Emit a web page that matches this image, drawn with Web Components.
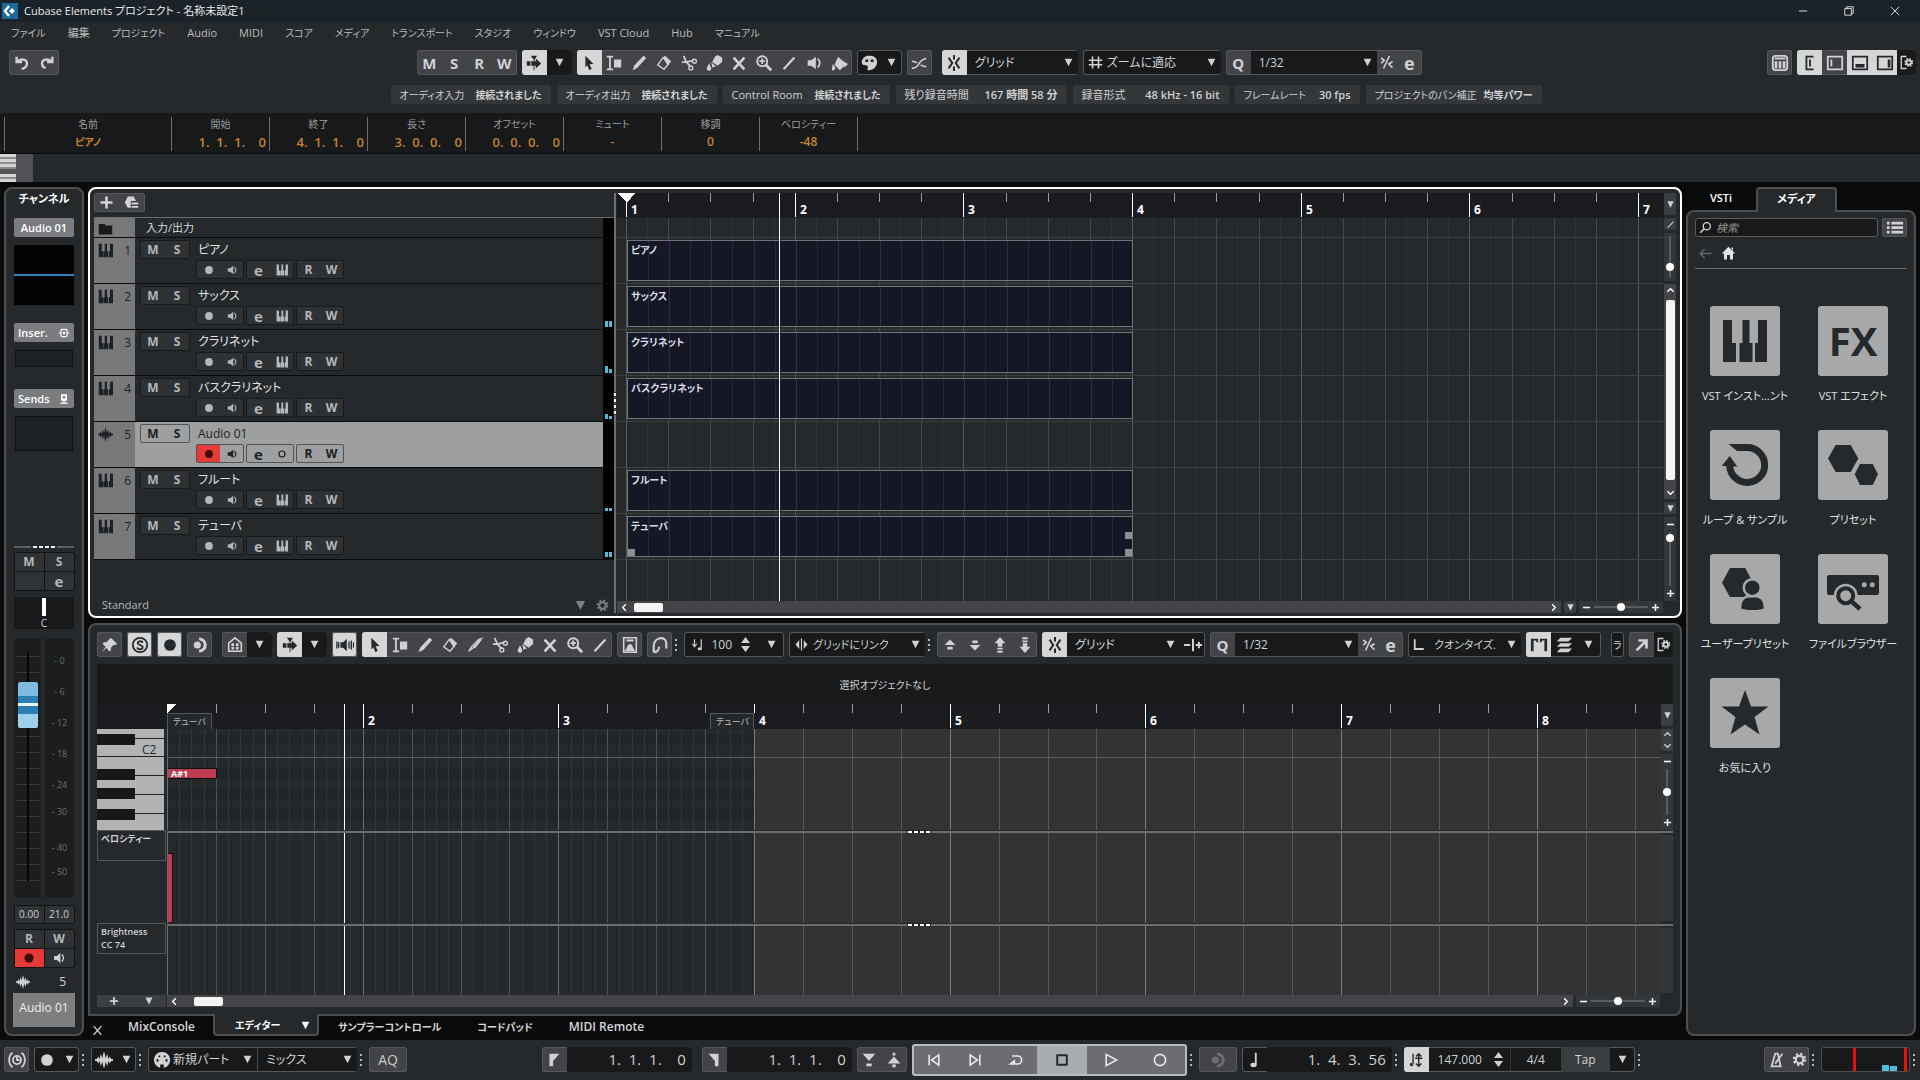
<!DOCTYPE html>
<html lang="ja">
<head>
<meta charset="UTF-8">
<meta name="viewport" content="width=device-width, initial-scale=1">
<title>Cubase Elements プロジェクト - 名称未設定1</title>
<style>
    html, body {
        margin: 0;
        height: 100%;
    }

    body {
        --panel: #25292c;
        --line: #4c4f52;
        --field: #17191a;
        --btn: #424447;
        --text: #cfd1d3;
        --accent: #c5822f;
        --cyan: #4fbdd8;
        background: var(--panel);
        color: var(--text);
        font-family: "Open Sans", "Noto Sans CJK JP", sans-serif;
        font-size: 12px;
        line-height: 16px;
        font-feature-settings: "palt";
        overflow: hidden;
    }
</style>
</head>
<body>
<cb-app></cb-app>

<script>
/* ---------- ICONS ---------- */
const S = 'fill="none" stroke="currentColor"';
const ICONS = {
    undo: `<path ${S} stroke-width="2.6" d="M4 3v6h6M4.500 8.500C8 5 16 5 15.500 11c-.3 3-3 5-6 5.500"/>`,
    redo: `<path ${S} stroke-width="2.6" d="M16 3v6h-6M15.500 8.500C12 5 4 5 4.500 11c.2 2 1.500 4 4 4.500"/>`,
    autoscroll: '<path d="M6.500 2h7l-3 4v12h-1V6zM2 8h4v5H2zM7 8h5V5l6 5.500-6 5.500v-3H7z"/>',
    select: '<path d="M6 2l9 9-4.500.5 2.500 5-2.500 1.500-2.500-5.500L6 15z"/>',
    range: '<path d="M2 2h7v2H6.500v12H9v2H2v-2h2.500V4H2zM10 6h8v9h-8z"/>',
    pencil: '<path d="M3 18l1.500-5L15 2l3 2.500L8 15.500z"/>',
    knife: `<path ${S} stroke-width="1.5" d="M3 17l5-4L17 3l-3 1L6 12z"/><path d="M8 12l8-9 1 2-7 9z"/>`,
    eraser: `<path d="M9 4l2-2 7 6-4 5z"/><path ${S} stroke-width="1.500" d="M3 12l6-8 6 7-5 6z"/>`,
    scissors: `<path ${S} stroke-width="2" d="M4 2l3 7 5 5M2 9h5l8-2"/><circle cx="16" cy="8" r="2.200" ${S} stroke-width="1.500"/><circle cx="12" cy="15.500" r="2.200" ${S} stroke-width="1.500"/>`,
    glue: '<path d="M8 9l3-6 3-2 5 3v5l-5 4zM7 9l5 5-4 1z"/><circle cx="4.500" cy="16" r="2.500"/><path d="M4.500 10l2.500 6H2z"/>',
    mute: `<path ${S} stroke-width="3" d="M4 4l12 13M16 4L4 17"/>`,
    zoom: `<circle cx="8" cy="8" r="5.500" ${S} stroke-width="2.200"/><path ${S} stroke-width="2" d="M8 5v6M5 8h6"/><path ${S} stroke-width="3.200" d="M12 12l6 6"/>`,
    line: `<path ${S} stroke-width="2.400" d="M4 17L16 4"/>`,
    speaker: `<path d="M3 7h4l5-4v14l-5-4H3z"/><path ${S} stroke-width="1.800" d="M14 5q5 5 0 10"/>`,
    bucket: '<path d="M9 3l9 8-7 7-6-6zM3 11l3 4-1 3H2z"/><path d="M13 7l7 4-4 4z"/>',
    palette: '<path fill-rule="evenodd" d="M10 2c5 0 9 2 9 7S14 19 9 18c-2-.5 1-4-1-5-2-.5-5 0-6-3-.5-5 4-8 8-8zM6 6v3h3V6zM12 6v3h3V6z"/>',
    crossfade: `<path ${S} stroke-width="1.800" d="M2 16c10 0 6-10 16-11M2 8c4 0 5 1 6 2M12 12c1 1 2 2 6 2"/>`,
    snap: `<path ${S} stroke-width="2.200" d="M4 4l4 6-4 6M16 4l-4 6 4 6M10 1v5M10 14v5"/>`,
    hash: `<path ${S} stroke-width="2.200" d="M6 2v16M14 2v16M1 7h18M1 13h18"/>`,
    iq: `<path ${S} stroke-width="2.200" d="M3 4l4 3-4 4M14 1L6 18M18 9l-5 3 5 5"/>`,
    down: '<path d="M3 3h14l-7 14z"/>',
    keys: '<path d="M1 1h4v10h2v8H1zM9 1h3v10h1.500v8h-6v-8H9zM16 1h4v18h-5.500v-8H16z"/>',
    rack: `<rect x="2" y="2" width="16" height="16" rx="3" ${S} stroke-width="2"/><path d="M4 8h3v8H4zM8.500 8h3v8h-3zM13 8h3v8h-3zM4 4h12v2H4z"/>`,
    zoneInsp: `<path ${S} stroke-width="2" d="M14 3H6v14h8"/><path d="M9 6h2v8H9z"/>`,
    zoneLeft: `<path ${S} stroke-width="2" d="M2 3h16v14H2z"/><path d="M5 6h2v8H5z"/>`,
    zoneLow: `<path ${S} stroke-width="2" d="M2 3h16v14H2z"/><path d="M5 11h10v4H5z"/>`,
    zoneRight: `<path ${S} stroke-width="2" d="M2 3h16v14H2z"/><path d="M13 6h3v9h-3z"/>`,
    setup: `<path ${S} stroke-width="1.800" d="M10 2H3v16h7"/><circle cx="13" cy="10" r="3" ${S} stroke-width="2.500"/><circle cx="13" cy="10" r="5" ${S} stroke-width="2" stroke-dasharray="2.200 1.720"/>`,
    gear: `<circle cx="10" cy="10" r="5" ${S} stroke-width="3"/><circle cx="10" cy="10" r="7.500" ${S} stroke-width="3" stroke-dasharray="3 2.900"/>`,
    folder: '<path d="M1 4h8l1 2h9v12H1z"/>',
    wave: '<path d="M0 9h2l1.500-3L5 9l1.500-6L8 8l2-8 2 8 1.500-5L15 9l1.500-3L18 9h2v2h-2l-1.500 3-1.500-3-1.500 6-1.500-5-2 8-2-8-1.500 5L5 11l-1.500 3L2 11H0z"/>',
    dot: '<circle cx="10" cy="10" r="6.500"/>',
    ring: `<circle cx="10" cy="10" r="5" ${S} stroke-width="2"/>`,
    plus: `<path ${S} stroke-width="3.500" d="M10 2v16M2 10h16"/>`,
    minus: `<path ${S} stroke-width="3.500" d="M2 10h16"/>`,
    preset: '<path d="M5 2h8l3 6H9v9H5L1 10zM10 10h9v2.500h-9zM10 14.500h9V17h-9z"/>',
    insert: `<rect x="5" y="4" width="10" height="12" rx="2" ${S} stroke-width="2"/><path d="M8 8h4v4H8zM1 9h3v2H1zM16 9h3v2h-3z"/>`,
    send: '<path fill-rule="evenodd" d="M5 2h10v11H5zM8 5v4h4V5zM9 13h2v3h5v2H4v-2h5z"/>',
    pin: '<path d="M11 2l7 7-2 1-2 0-3 3v3l-2 1-3-4-5 5 4-6-3-3 1-2h3l3-3z"/>',
    solo: `<circle cx="10" cy="10" r="8" ${S} stroke-width="2"/><path ${S} stroke-width="2" d="M13 7.500C12 5 7 5.500 7.500 8c.5 2 5 2 5.500 4.500.2 3-5.500 3-6 .2"/>`,
    feedback: `<circle cx="7" cy="10" r="4"/><path ${S} stroke-width="3.500" d="M9 3c9 1 9 13 0 14"/>`,
    home2: `<path ${S} stroke-width="1.800" d="M3 8l7-6 7 6v9H3z"/><path d="M6 8h3v3H6zM11 8h3v3h-3zM6 12h3v3H6zM11 12h3v3h-3z"/>`,
    acoustic: `<path d="M5 7h3l4-4v14l-4-4H5z"/><path ${S} stroke-width="1.500" d="M1 6v8M3 7v6M14.500 6v8M17 5v10M19.500 7v6"/>`,
    part: `<path ${S} stroke-width="1.800" d="M3 2h14v16H3z"/><path d="M6 4h8v2H6zM4 17c3-3 3-8 6-8s3 5 6 8z"/>`,
    loop: `<path ${S} stroke-width="2.400" d="M3 18v-6C3 0 17 0 17 8v6M3 18c3 0 6-2 6-6"/>`,
    noteIn: `<path ${S} stroke-width="1.600" d="M6 3v9M3 9l3 4 3-4M15 3v12"/><ellipse cx="13" cy="15.500" rx="3" ry="2"/>`,
    link: '<path d="M9.200 2h1.600v16H9.200zM7 4v12L2 10zM13 4v12l5-6z"/>',
    up1: '<path d="M10 4l6 6H4zM7 12h6v3H7z"/>',
    down1: '<path d="M10 16l6-6H4zM7 5h6v3H7z"/>',
    up2: '<path d="M10 1l6 7H4zM7.500 8h5v4h-5zM7 13h6v2H7zM7 16.500h6v2H7z"/>',
    down2: '<path d="M10 19l6-7H4zM7.500 8h5v4h-5zM7 1.500h6v2H7zM7 5h6v2H7z"/>',
    nudge: `<path ${S} stroke-width="2.200" d="M0 10h7M10 3v14M13 10h7M16.500 6.500v7"/>`,
    ell: `<path ${S} stroke-width="2.400" d="M5 3v13h12"/>`,
    magnet: '<path d="M1 3h8v4H7V5H4v12H1zM11 3h8v14h-3V5h-3v2h-2z"/>',
    stack: '<path d="M6 2h13l-4 4H2zM6 8h13l-4 4H2zM6 14h13l-4 4H2z"/>',
    open: `<path ${S} stroke-width="3" d="M6 5h9v9M15 5L4 16"/>`,
    search: `<circle cx="12" cy="8" r="5.500" ${S} stroke-width="2"/><path ${S} stroke-width="2.500" d="M8 12l-6 6"/>`,
    list: '<path d="M1 3h3v3H1zM6 3h13v3H6zM1 8h3v3H1zM6 8h13v3H6zM1 13h3v3H1zM6 13h13v3H6z"/>',
    back: `<path ${S} stroke-width="2" d="M18 10H3M9 4l-6 6 6 6"/>`,
    home: '<path d="M10 1l9 9h-3v8h-4v-6H8v6H4v-8H1zM14 2h2v4l-2-2z"/>',
    clock: `<circle cx="10" cy="10" r="4.500" ${S} stroke-width="2"/><path ${S} stroke-width="2" d="M10 6v4h3M5 2c-5 4-5 12 0 16M15 2c5 4 5 12 0 16"/>`,
    midi: '<path fill-rule="evenodd" d="M10 1a9 9 0 1 0 .1 0zM4 9h2v3H4zM6 5h2v2H6zM12 5h2v2h-2zM14 9h2v3h-2zM8 15h4v4H8z"/>',
    locL: '<path d="M5 3h11l-7 8v6H5z"/>',
    locR: '<path d="M15 3H4l7 8v6h4z"/>',
    inP: '<path d="M3 3h14l-7 8zM7 14h6v3H7z"/>',
    outP: '<path d="M10 6l7 8H3zM8 15h4v3H8zM8.500 2h3v3h-3z"/>',
    toStart: `<path ${S} stroke-width="2" d="M4 3v14M16 3.500L7 10l9 6.500z"/>`,
    toEnd: `<path ${S} stroke-width="2" d="M16 3v14M4 3.500l9 6.500-9 6.500z"/>`,
    cycle: `<path ${S} stroke-width="2" d="M5 5h7a4.500 4.500 0 0 1 0 10H5M8 11l-5 4h5z"/>`,
    stop: `<path ${S} stroke-width="2.400" d="M4 4h12v12H4z"/>`,
    play: `<path ${S} stroke-width="2" d="M4 3l13 7-13 7z"/>`,
    rec: `<circle cx="10" cy="10" r="7" ${S} stroke-width="2"/>`,
    note: '<path d="M11 2h2v13h-2z"/><ellipse cx="9.500" cy="15.500" rx="3.500" ry="2.500"/>',
    tempo: `<path d="M6 3h1.500v12H6zM3 15a2 2 0 1 0 4 0 2 2 0 1 0-4 0"/><path ${S} stroke-width="1.600" d="M13 3v14M10 6l3-3 3 3M10 14l3 3 3-3M9 8h8"/>`,
    click: `<path ${S} stroke-width="2" d="M8 3h3l3 14H4zM8 14l8-11"/>`,
    spin: '<path d="M10 0l6 8H4zM10 20l6-8H4z"/>',
    close: `<path ${S} stroke-width="2.400" d="M3 2l14 16M17 2L3 18"/>`,
    winMin: `<path ${S} stroke-width="1.500" d="M3 10h14"/>`,
    winMax: `<path ${S} stroke-width="1.500" d="M3 6h11v11H3zM6 6V3h11v11h-3"/>`,
    winClose: `<path ${S} stroke-width="1.500" d="M3 3l14 14M17 3L3 17"/>`,
    chevL: `<path ${S} stroke-width="3" d="M13 3l-7 7 7 7"/>`,
    chevR: `<path ${S} stroke-width="3" d="M7 3l7 7-7 7"/>`,
    chevU: `<path ${S} stroke-width="3" d="M3 13l7-7 7 7"/>`,
    chevD: `<path ${S} stroke-width="3" d="M3 7l7 7 7-7"/>`
};

class CbElement extends HTMLElement {
    constructor() {
        super();
        this.attachShadow({ mode: 'open' });
    }

    connectedCallback() {
        this.shadowRoot.innerHTML = `<style>
            *, :host { box-sizing: border-box; }
            button, input, select {
                font: inherit;
                font-feature-settings: inherit;
                color: inherit;
                margin: 0;
                padding: 0;
                border: 0;
                background: none;
                min-width: 0;
            }
            ${this.styles}
        </style>${this.markup}`;
    }

    attr(name, fallback = '') {
        return this.getAttribute(name) ?? fallback;
    }
}

class CbIcon extends CbElement {
    get styles() {
        return `
            :host { display: block; flex: none; width: var(--icon, 18px); height: var(--icon, 18px); }
            svg { display: block; width: 100%; height: 100%; fill: currentColor; }
        `;
    }

    get markup() {
        return `<svg viewBox="0 0 20 20" aria-hidden="true">${ICONS[this.attr('name')]}</svg>`;
    }
}
customElements.define('cb-icon', CbIcon);

/* Button for toolbars: <cb-btn icon="pencil" label="..."></cb-btn> or text in the slot */
class CbBtn extends CbElement {
    get styles() {
        return `
            :host { display: flex; flex: none; width: 25px; align-self: stretch; }
            :host([on]) { background: #d5d6d7; color: #25292c; }
            :host([dark]) { background: var(--field); }
            :host([narrow]) { width: 20px; --icon: 15px; }
            :host([arrow]) { --icon: 11px; }
            :host([red]) { background: #e53a36; color: #3a0c0a; }
            button {
                flex: 1;
                display: flex;
                align-items: center;
                justify-content: center;
                cursor: pointer;
            }
        `;
    }

    get markup() {
        const icon = this.attr('icon');
        return `<button type="button" ${this.hasAttribute('label') ? `aria-label="${this.attr('label')}"` : ''}>
            ${icon ? `<cb-icon name="${icon}"></cb-icon>` : '<slot></slot>'}
        </button>`;
    }
}
customElements.define('cb-btn', CbBtn);

class CbGroup extends CbElement {
    get styles() {
        return `
            :host {
                display: flex;
                flex: none;
                height: 25px;
                align-items: center;
                background: var(--btn);
                border-radius: 3px;
                box-shadow: inset 0 0 0 1px #55585a;
                overflow: hidden;
            }
            :host([field]) { background: var(--field); }
            :host([on]) { background: #d5d6d7; color: #25292c; }
        `;
    }

    get markup() {
        return '<slot></slot>';
    }
}
customElements.define('cb-group', CbGroup);

class CbSelect extends CbElement {
    get styles() {
        return `
            :host { display: grid; align-items: center; height: 23px; flex: none; margin: 1px 0; background: var(--field); }
            select, cb-icon { grid-area: 1 / 1; }
            select { appearance: none; width: 100%; height: 100%; padding: 0 16px 0 var(--pad, 8px); cursor: pointer; }
            cb-icon { --icon: 11px; justify-self: end; margin-right: 4px; pointer-events: none; }
        `;
    }

    get markup() {
        return `<select aria-label="${this.attr('label')}"><option>${this.attr('value')}</option></select>
            <cb-icon name="down"></cb-icon>`;
    }
}
customElements.define('cb-select', CbSelect);

class CbDots extends CbElement {
    get styles() {
        return `
            :host { display: flex; flex-direction: column; gap: 3px; width: 2px; flex: none; }
            i { height: 2px; background: #b5b7b9; }
        `;
    }

    get markup() {
        return '<i></i><i></i><i></i>';
    }
}
customElements.define('cb-dots', CbDots);

/* Zoom slider, horizontal or vertical */
class CbSlider extends CbElement {
    get styles() {
        return `
            :host { display: flex; align-items: center; gap: 3px; background: #34373a; height: 12px; padding: 0 3px; --icon: 9px; color: #f2f2f2; }
            :host([vertical]) { flex-direction: column; width: 12px; height: auto; padding: 3px 0; }
            input { appearance: none; flex: 1; width: 100%; height: 12px; background: linear-gradient(#595c5e, #595c5e) center / 100% 2px no-repeat; }
            :host([vertical]) input { writing-mode: vertical-lr; direction: rtl; width: 12px; height: auto; min-height: 0; background-size: 2px 100%; }
            input::-webkit-slider-thumb { appearance: none; width: 8px; height: 8px; border-radius: 50%; background: #fff; }
        `;
    }

    get markup() {
        const bare = this.hasAttribute('bare');
        return `${bare ? '' : '<cb-icon name="minus"></cb-icon>'}
            <input type="range" value="${this.attr('value', 50)}" aria-label="${this.attr('label')}">
            ${bare ? '' : '<cb-icon name="plus"></cb-icon>'}`;
    }
}
customElements.define('cb-slider', CbSlider);

class CbTitleBar extends CbElement {
    get styles() {
        return `
            :host { display: flex; align-items: center; height: 22px; padding: 0 2px; gap: 6px; background: #1b2228; color: #e8eaeb; }
            .logo { width: 16px; height: 16px; }
            .title { flex: 1; font-size: 11px; }
            button { width: 46px; height: 20px; display: grid; place-items: center; --icon: 12px; }
            .win { display: flex; }
        `;
    }

    get markup() {
        return `
            <svg class="logo" viewBox="0 0 16 16"><path fill="#1c6a9c" d="M0 0h16v16H0z"/><path fill="none" stroke="#fff" stroke-width="2.500" d="M7 3L3 8l4 5"/><path fill="#fff" d="M10 5l3 3-3 3-3-3z"/></svg>
            <span class="title">Cubase Elements プロジェクト - 名称未設定1</span>
            <div class="win">
                <button aria-label="最小化"><cb-icon name="winMin"></cb-icon></button>
                <button aria-label="元に戻す"><cb-icon name="winMax"></cb-icon></button>
                <button aria-label="閉じる"><cb-icon name="winClose"></cb-icon></button>
            </div>
        `;
    }
}
customElements.define('cb-title-bar', CbTitleBar);

class CbMenuBar extends CbElement {
    get styles() {
        return `
            :host { display: flex; align-items: center; gap: 22px; height: 22px; padding-left: 11px; font-size: 11px; color: #b9bbbd; }
            .kana { font-size: 10px; }
        `;
    }

    get markup() {
        const items = ['ファイル', '編集', 'プロジェクト', 'Audio', 'MIDI', 'スコア', 'メディア', 'トランスポート',
            'スタジオ', 'ウィンドウ', 'VST Cloud', 'Hub', 'マニュアル'];
        return items.map(item => `<button class="${/[ァ-ヶ]/.test(item) ? 'kana' : ''}">${item}</button>`).join('');
    }
}
customElements.define('cb-menu-bar', CbMenuBar);

class CbToolbar extends CbElement {
    get styles() {
        return `
            :host { display: flex; align-items: center; gap: 5px; height: 37px; padding: 0 4px 0 9px; }
            .l { flex: 28; }
            .r { flex: 27; }
            b { font-size: 15px; font-weight: 700; }
            .e { font-size: 18px; }
            .snap { width: 111px; }
            .adapt { width: 118px; --pad: 4px; }
            .quant { width: 126px; }
            .gap { width: 0; }
            .hash { margin-left: 5px; --icon: 15px; }
            .setup { width: 19px; --icon: 15px; }
        `;
    }

    get markup() {
        return `
            <cb-group><cb-btn icon="undo" label="元に戻す"></cb-btn><cb-btn icon="redo" label="再実行"></cb-btn></cb-group>
            <span class="l"></span>
            <cb-group>${['M', 'S', 'R', 'W'].map(t => `<cb-btn><b>${t}</b></cb-btn>`).join('')}</cb-group>
            <cb-group><cb-btn on icon="autoscroll" label="自動スクロール"></cb-btn><cb-btn dark arrow icon="down" label="自動スクロール設定"></cb-btn></cb-group>
            <cb-group>
                <cb-btn on icon="select" label="選択"></cb-btn>
                ${['range', 'pencil', 'eraser', 'scissors', 'glue', 'mute', 'zoom', 'line', 'speaker', 'bucket']
                    .map(t => `<cb-btn icon="${t}" label="${t}"></cb-btn>`).join('')}
            </cb-group>
            <cb-group field><cb-btn icon="palette" label="カラー"></cb-btn><cb-btn narrow arrow icon="down" label="カラーメニュー"></cb-btn></cb-group>
            <cb-group><cb-btn icon="crossfade" label="ゼロクロス"></cb-btn></cb-group>
            <span class="gap"></span>
            <cb-group field><cb-btn on icon="snap" label="スナップ"></cb-btn><cb-select class="snap" value="グリッド" label="スナップタイプ"></cb-select></cb-group>
            <cb-group field><cb-icon class="hash" name="hash"></cb-icon><cb-select class="adapt" value="ズームに適応" label="グリッドの種類"></cb-select></cb-group>
            <cb-group><cb-btn><b>Q</b></cb-btn><cb-select class="quant" value="1/32" label="クオンタイズ"></cb-select><cb-btn narrow icon="iq" label="反復クオンタイズ"></cb-btn><cb-btn><b class="e">e</b></cb-btn></cb-group>
            <span class="r"></span>
            <cb-group><cb-btn icon="rack" label="VST インストゥルメント"></cb-btn></cb-group>
            <cb-group>
                <cb-btn on icon="zoneInsp" label="インスペクター"></cb-btn>
                <cb-btn icon="zoneLeft" label="左ゾーン"></cb-btn>
                <cb-btn on icon="zoneLow" label="下ゾーン"></cb-btn>
                <cb-btn on icon="zoneRight" label="右ゾーン"></cb-btn>
                <cb-btn dark class="setup" icon="setup" label="設定"></cb-btn>
            </cb-group>
        `;
    }
}
customElements.define('cb-toolbar', CbToolbar);

class CbStatusLine extends CbElement {
    get styles() {
        return `
            :host { display: flex; justify-content: center; gap: 6px; height: 32px; padding: 4px 0 9px 12px; font-size: 11px; }
            div { display: flex; align-items: center; justify-content: space-between; padding: 0 9px; background: #34373a; border-radius: 2px; white-space: nowrap; }
            b { font-weight: 600; }
            .kana { font-size: 10px; }
        `;
    }

    get markup() {
        const chips = [
            ['オーディオ入力', '接続されました', 160], ['オーディオ出力', '接続されました', 160],
            ['Control Room', '接続されました', 167], ['残り録音時間', '167 時間 58 分', 171],
            ['録音形式', '48 kHz - 16 bit', 156], ['フレームレート', '30 fps', 125],
            ['プロジェクトのパン補正', '均等パワー', 176]
        ];
        const size = t => /[ァ-ヶ]{2}|ました/.test(t) ? 'kana' : '';
        return chips.map(([k, v, w]) => `<div style="width:${w}px"><span class="${size(k)}">${k}</span><b class="${size(v)}">${v}</b></div>`).join('');
    }
}
customElements.define('cb-status-line', CbStatusLine);

class CbInfoLine extends CbElement {
    get styles() {
        return `
            :host { display: flex; height: 41px; padding: 4px 0 2px 4px; background: #17191a; border-bottom: 1px solid #0a0a0b; }
            div { width: 98px; padding: 0 3px; border-left: 1px solid #6a6c6e; text-align: center; font-size: 10px; }
            div:first-of-type { width: 167px; }
            div:last-of-type { width: 99px; border-right: 1px solid #6a6c6e; }
            span { display: block; line-height: 15px; color: #9c9ea0; }
            b { display: block; font-weight: 600; font-size: 12px; line-height: 20px; color: var(--accent); white-space: pre; }
            .pos b { text-align: right; font-size: 13px; }
            .name b { font-size: 10px; }
        `;
    }

    get markup() {
        const cells = [
            ['名前', 'ピアノ', 'name'], ['開始', '1.  1.  1.    0', 'pos'], ['終了', '4.  1.  1.    0', 'pos'],
            ['長さ', '3.  0.  0.    0', 'pos'], ['オフセット', '0.  0.  0.    0', 'pos'],
            ['ミュート', '-', ''], ['移調', '0', ''], ['ベロシティー', '-48', '']
        ];
        return cells.map(([k, v, kind]) => `<div class="${kind}"><span>${k}</span><b>${v}</b></div>`).join('');
    }
}
customElements.define('cb-info-line', CbInfoLine);

class CbOverview extends CbElement {
    get styles() {
        return `
            :host { display: flex; height: 28px; }
            div { width: 33px; background: #515356; }
            i { display: block; width: 16px; height: 15px; margin-bottom: 5px; background: repeating-linear-gradient(#d4d4d4 0 3px, #8b8d8f 3px 5px); }
            i + i { height: 8px; margin: 0; }
        `;
    }

    get markup() {
        return '<div><i></i><i></i></div>';
    }
}
customElements.define('cb-overview', CbOverview);

/* ---------- CHANNEL STRIP ---------- */
class CbChannel extends CbElement {
    get styles() {
        return `
            :host { display: flex; flex-direction: column; align-items: center; border: 2px solid var(--line); border-radius: 8px; background: var(--panel); padding: 1px 0 7px; }
            h2 { margin: 0 0 11px; font-size: 11px; line-height: 17px; font-weight: 600; color: #fff; flex: none; }
            .head { display: flex; align-items: center; justify-content: center; width: 60px; height: 19px; flex: none; background: #7a7c7f; border-radius: 2px; color: #fff; font-weight: 600; font-size: 11px; --icon: 12px; }
            .head.two { justify-content: space-between; padding: 0 4px; }
            .eq { width: 60px; height: 60px; flex: none; margin: 8px 0 18px; background: linear-gradient(#2f84bd, #2f84bd) center / 100% 2px no-repeat #020202; }
            .slot { width: 58px; height: 17px; flex: none; margin: 8px 0 22px; background: #1e2123; border: 1px solid #0f1011; }
            .slot.tall { height: 35px; margin-bottom: 0; }
            .fill { flex: 1; }
            .split { width: 60px; height: 2px; flex: none; background: linear-gradient(90deg, #5b5d5f 28%, transparent 28% 72%, #5b5d5f 72%); display: flex; justify-content: center; gap: 2px; }
            .split i { width: 4px; height: 2px; background: #eee; }
            .pad { display: grid; grid-template-columns: 1fr 1fr; grid-auto-rows: 18px; gap: 1px; width: 61px; padding: 1px; flex: none; background: #111213; border-radius: 2px; --icon: 14px; }
            .pad > * { background: #303336; width: auto; text-align: center; }
            .pad cb-btn[red] { background: #e53a36; }
            .pad b { font-size: 12px; color: #b4b6b8; }
            .pad .e { font-size: 15px; }
            .ms { margin: 4px 0 6px; }
            .pan { width: 60px; height: 32px; flex: none; background: #17191a; display: flex; flex-direction: column; align-items: center; font-size: 10px; line-height: 12px; }
            .pan i { width: 4px; height: 18px; background: #fff; margin: 1px 0; }
            .fader { display: grid; grid-template-columns: 27px 29px; gap: 4px; height: 260px; flex: none; margin: 9px 0 7px; }
            .fader > div { background: #1b1d1e; border-radius: 3px; display: flex; justify-content: center; }
            input { appearance: none; writing-mode: vertical-lr; direction: rtl; width: 22px; height: 252px; background: linear-gradient(#050505, #050505) center / 2px 228px no-repeat, repeating-linear-gradient(transparent 0 15px, #3b3d3f 15px 16px); margin-top: 3px; }
            input::-webkit-slider-thumb { appearance: none; width: 20px; height: 46px; border-radius: 2px; background: linear-gradient(#7dbbe0 0 30%, #2a7fb5 30% 46%, #e8f4fa 46% 52%, #2a7fb5 52% 70%, #9ed0ec 70%); }
            .scale { flex-direction: column; justify-content: flex-start !important; padding-top: 15px; color: #6e7072; font-size: 9px; text-align: center; }
            .scale span { flex: 0 0 31px; }
            .scale span:nth-child(n+5) { flex-basis: 27px; }
            .scale span:nth-child(6) { flex-basis: 36px; }
            .scale span:nth-child(7) { flex-basis: 24px; }
            .vals { font-size: 10px; line-height: 17px; grid-auto-rows: 17px; }
            .rw { margin: 5px 0 6px; }
            .num { display: flex; justify-content: space-between; align-items: center; width: 56px; height: 16px; --icon: 14px; margin-bottom: 3px; padding-right: 6px; flex: none; }
            .name { width: 62px; height: 34px; flex: none; background: #7c7e80; color: #f0f0f0; text-align: center; line-height: 30px; white-space: nowrap; }
        `;
    }

    get markup() {
        return `
            <h2>チャンネル</h2>
            <div class="head">Audio 01</div>
            <div class="eq"></div>
            <div class="head two">Inser.<cb-icon name="insert"></cb-icon></div>
            <div class="slot"></div>
            <div class="head two">Sends<cb-icon name="send"></cb-icon></div>
            <div class="slot tall"></div>
            <div class="fill"></div>
            <div class="split"><i></i><i></i><i></i><i></i></div>
            <div class="pad ms"><cb-btn><b>M</b></cb-btn><cb-btn><b>S</b></cb-btn><span></span><cb-btn><b class="e">e</b></cb-btn></div>
            <div class="pan"><i></i>C</div>
            <div class="fader">
                <div><input type="range" min="0" max="100" value="80" aria-label="音量"></div>
                <div class="scale">${[0, 6, 12, 18, 24, 30, 40, 50].map(n => `<span>- ${n}</span>`).join('')}</div>
            </div>
            <div class="pad vals"><span>0.00</span><span>21.0</span></div>
            <div class="pad rw"><cb-btn><b>R</b></cb-btn><cb-btn><b>W</b></cb-btn><cb-btn red icon="dot" label="録音可能"></cb-btn><cb-btn icon="speaker" label="モニター"></cb-btn></div>
            <div class="num"><cb-icon name="wave"></cb-icon><span>5</span></div>
            <div class="name">Audio 01</div>
        `;
    }
}
customElements.define('cb-channel', CbChannel);

/* ---------- TRACK LIST ---------- */
class CbTrack extends CbElement {
    get styles() {
        return `
            :host { display: flex; height: 46px; flex: none; border-bottom: 1px solid #08090a; color: #b5b7b9; }
            .tab { width: 41px; background: #77797b; color: #1f2224; display: flex; justify-content: space-between; padding: 5px 4px 0; --icon: 15px; font-size: 12px; }
            .body { flex: 1; display: grid; grid-template-columns: 50px 1fr; column-gap: 6px; row-gap: 1px; align-content: start; padding: 2px 0 0 5px; }
            .body > span { line-height: 19px; padding-left: 2px; color: #e0e2e3; }
            .set { display: grid; grid-auto-flow: column; grid-auto-columns: 1fr; height: 19px; border: 1px solid #17191a; border-radius: 2px; background: #2f3235; --icon: 12px; }
            .set cb-btn { width: auto; }
            .row { grid-column: 2; display: flex; gap: 2px; }
            .row .set { width: 48px; }
            b { font-size: 12px; }
            .e { font-size: 15px; }
            .meter { width: 11px; background: #020202; display: flex; align-items: flex-end; justify-content: center; gap: 1px; padding-bottom: 2px; }
            .meter i { width: 3px; background: var(--cyan); }
            :host([selected]) .body { background: #9d9fa1; color: #1c1e20; }
            :host([selected]) .body > span { color: #1c1e20; }
            :host([selected]) .set { border-color: #515355; background: none; }
        `;
    }

    get markup() {
        const audio = this.attr('kind') === 'audio';
        const levels = this.attr('levels', '0,0').split(',');
        return `
            <div class="tab"><cb-icon name="${audio ? 'wave' : 'keys'}"></cb-icon>${this.attr('no')}</div>
            <div class="body">
                <div class="set"><cb-btn><b>M</b></cb-btn><cb-btn><b>S</b></cb-btn></div>
                <span>${this.attr('name')}</span>
                <div class="row">
                    <div class="set"><cb-btn ${audio ? 'red' : ''} icon="dot" label="録音可能"></cb-btn><cb-btn icon="speaker" label="モニター"></cb-btn></div>
                    <div class="set"><cb-btn><b class="e">e</b></cb-btn><cb-btn icon="${audio ? 'ring' : 'keys'}" label="編集"></cb-btn></div>
                    <div class="set"><cb-btn><b>R</b></cb-btn><cb-btn><b>W</b></cb-btn></div>
                </div>
            </div>
            <div class="meter">${levels.map(l => `<i style="height:${l}px"></i>`).join('')}</div>
        `;
    }
}
customElements.define('cb-track', CbTrack);

const TRACKS = [
    { name: 'ピアノ', levels: '0,0' },
    { name: 'サックス', levels: '6,6' },
    { name: 'クラリネット', levels: '7,4' },
    { name: 'バスクラリネット', levels: '5,3' },
    { name: 'Audio 01', levels: '0,0', audio: true },
    { name: 'フルート', levels: '3,3' },
    { name: 'テューバ', levels: '5,5', handles: true }
];

class CbTrackList extends CbElement {
    get styles() {
        return `
            :host { display: flex; flex-direction: column; min-height: 0; }
            header { height: 25px; flex: none; border-bottom: 1px solid #6a6c6e; }
            header cb-group { height: 19px; width: 51px; --icon: 15px; }
            .io { display: flex; height: 20px; flex: none; border-bottom: 1px solid #08090a; font-size: 11px; line-height: 19px; color: #d8dadb; }
            .io div { width: 41px; background: #77797b; color: #17191a; padding: 3px 4px; --icon: 15px; margin-right: 11px; }
            .io span { flex: 1; }
            .io i { width: 11px; background: #020202; }
            footer { margin-top: auto; display: flex; align-items: center; gap: 9px; padding: 0 5px 0 8px; --icon: 13px; color: #7f8183; }
            footer span { flex: 1; color: #b5b7b9; font-size: 11px; }
        `;
    }

    get markup() {
        return `
            <header><cb-group><cb-btn icon="plus" label="トラックを追加"></cb-btn><cb-btn icon="preset" label="プリセット"></cb-btn></cb-group></header>
            <div class="io"><div><cb-icon name="folder"></cb-icon></div><span>入力/出力</span><i></i></div>
            ${TRACKS.map((t, i) => `<cb-track no="${i + 1}" name="${t.name}" levels="${t.levels}" ${t.audio ? 'kind="audio" selected' : ''}></cb-track>`).join('')}
            <footer><span>Standard</span><cb-icon name="down"></cb-icon><cb-icon name="gear"></cb-icon></footer>
        `;
    }
}
customElements.define('cb-track-list', CbTrackList);

/* ---------- TIMELINE DRAWING ---------- */
function gridRects({ origin, bar, bars, split, colors }) {
    let out = '';
    const per = split * 4;
    for (let i = 0; i < bars * per; i++) {
        const level = i % per === 0 ? 0 : i % split === 0 ? 1 : 2;
        if (!colors[level]) continue;
        out += `<rect x="${Math.round(origin + i * bar / per)}" width="1" height="100%" fill="${colors[level]}"/>`;
    }
    return out;
}

function rulerMarks({ origin, bar, bars, skip = [] }) {
    let out = '';
    for (let i = 0; i < bars * 4; i++) {
        const x = Math.round(origin + i * bar / 4);
        const isBar = i % 4 === 0;
        const n = i / 4 + 1;
        const tall = isBar && !skip.includes(n);
        out += `<rect x="${x}" width="1" height="${tall ? 24 : 9}" fill="${isBar ? '#fff' : '#9a9c9e'}"/>`;
        if (isBar && n !== skip[0]) out += `<text x="${x + 5}" y="21">${n}</text>`;
    }
    return out;
}

const TIMELINE_CSS = `
    svg { display: block; width: 100%; height: 100%; overflow: hidden; shape-rendering: crispEdges; }
    svg text { fill: #fff; font-size: 12px; font-weight: 700; }
`;

class CbScroll extends CbElement {
    get styles() {
        return `
            :host { display: flex; align-items: center; height: 12px; background: #434548; padding: 0 3px; --icon: 9px; color: #fff; }
            i { flex: none; width: 29px; height: 9px; border-radius: 2px; background: #f4f4f4; margin: 0 auto 0 var(--from, 4px); }
            :host([vertical]) { flex-direction: column; width: 12px; height: auto; padding: 2px 0; justify-content: space-between; }
            :host([vertical]) i { width: 9px; height: auto; flex: 1; margin: 5px 0 8px; }
        `;
    }

    get markup() {
        const [a, b] = this.hasAttribute('vertical') ? ['chevU', 'chevD'] : ['chevL', 'chevR'];
        return `<cb-icon name="${a}"></cb-icon><i></i><cb-icon name="${b}"></cb-icon>`;
    }
}
customElements.define('cb-scroll', CbScroll);

class CbArrange extends CbElement {
    get styles() {
        return `
            :host { display: grid; grid-template: 25px minmax(0, 1fr) 12px / minmax(0, 1fr) 12px; min-width: 0; min-height: 0; }
            ${TIMELINE_CSS}
            .ruler { background: #1b1c20; }
            .lanes { display: grid; grid-template: minmax(0, 1fr) / minmax(0, 1fr); overflow: hidden; }
            .lanes > * { grid-area: 1 / 1; }
            .rows { display: flex; flex-direction: column; z-index: 1; }
            .head { z-index: 2; pointer-events: none; }
            .rows > div { height: 46px; flex: none; padding: 2px 0 2px 10px; border-bottom: 1px solid #3d4043; }
            .rows > div:first-child { height: 20px; }
            .event { position: relative; width: 506px; height: 41px; background: #151725; border: 1px solid #727476; display: grid; }
            .event > * { grid-area: 1 / 1; }
            .event span { padding: 1px 3px; font-size: 10px; font-weight: 600; color: #dcdce8; }
            .event i { position: absolute; width: 7px; height: 7px; background: #8c8e96; }
            .side { display: flex; flex-direction: column; grid-row: 1 / 3; grid-column: 2; gap: 3px; --icon: 9px; min-height: 0; }
            .box { display: grid; place-items: center; background: #3c3f42; height: 12px; width: 12px; border-radius: 2px; flex: none; }
            .tall { height: 22px; }
            .bottom { grid-column: 1 / 3; display: flex; gap: 3px; --icon: 9px; padding-right: 13px; }
            .bottom cb-scroll { flex: 1; --from: 5px; }
            .bottom cb-slider { width: 84px; }
        `;
    }

    get markup() {
        const zoom = { origin: 9, bar: 168.667, bars: 7 };
        const part = gridRects({ origin: -1, bar: 168.667, bars: 3, split: 2, colors: ['#2f3063', '#2b2d58', '#25274a'] });
        const event = t => `<div class="event"><svg>${part}</svg><span>${t.name}</span>
            ${t.handles ? '<i style="left:0;bottom:0"></i><i style="right:0;bottom:0"></i><i style="right:0;top:15px"></i>' : ''}</div>`;
        return `
            <div class="ruler"><svg>${rulerMarks(zoom)}<path fill="#fff" d="M1 0h17l-8 10z"/><rect x="162" width="1" height="100%" fill="#fff"/></svg></div>
            <div class="lanes">
                <svg>${gridRects({ ...zoom, split: 2, colors: ['#56595b', '#45494b', '#2e3235'] })}</svg>
                <div class="rows"><div></div>${TRACKS.map(t => `<div>${t.audio ? '' : event(t)}</div>`).join('')}</div>
                <svg class="head"><rect x="162" width="1" height="100%" fill="#fff"/></svg>
            </div>
            <div class="side">
                <div class="box tall"><cb-icon name="down"></cb-icon></div>
                <div class="box"><cb-icon name="line"></cb-icon></div>
                <cb-slider vertical bare value="20" label="波形のズーム" style="height:48px"></cb-slider>
                <cb-scroll vertical style="flex:1"></cb-scroll>
                <div class="box"><cb-icon name="down"></cb-icon></div>
                <cb-slider vertical value="95" label="縦ズーム" style="height:84px"></cb-slider>
            </div>
            <div class="bottom">
                <cb-scroll></cb-scroll>
                <div class="box"><cb-icon name="down"></cb-icon></div>
                <cb-slider value="50" label="横ズーム"></cb-slider>
            </div>
        `;
    }
}
customElements.define('cb-arrange', CbArrange);

class CbProject extends CbElement {
    get styles() {
        return `
            :host { display: grid; grid-template: minmax(0, 1fr) / 520px 3px minmax(0, 1fr); border: 2px solid #fff; border-radius: 8px; padding: 4px 4px 3px; background: var(--panel); min-height: 0; }
            .div { background: linear-gradient(90deg, #6c6e70 2px, transparent 2px); display: flex; flex-direction: column; align-items: flex-start; justify-content: center; gap: 3px; }
            .div i { width: 2px; height: 3px; background: #fff; outline: 1px solid var(--panel); }
        `;
    }

    get markup() {
        return '<cb-track-list></cb-track-list><div class="div"><i></i><i></i><i></i><i></i></div><cb-arrange></cb-arrange>';
    }
}
customElements.define('cb-project', CbProject);

/* ---------- KEY EDITOR ---------- */
class CbEditorTools extends CbElement {
    get styles() {
        return `
            :host { display: flex; align-items: center; gap: 5px; height: 25px; flex: none; }
            .push { margin-left: 5px; }
            b { font-size: 15px; }
            .e { font-size: 18px; }
            cb-dots { margin: 0 2px 0 -2px; }
            .vel { width: 100px; --icon: 15px; }
            .vel input { width: 32px; text-align: right; }
            .vel cb-icon { margin: 0 6px; }
            .length { width: 116px; --pad: 4px; font-size: 11px; }
            .snap { width: 113px; }
            .quant { width: 123px; }
            .preset { width: 93px; font-size: 11px; --pad: 6px; }
            .link { margin-left: 5px; --icon: 15px; }
            .setup { width: 19px; --icon: 15px; }
            .more { width: 13px; padding-left: 2px; font-size: 10px; }
        `;
    }

    get markup() {
        return `
            <cb-group><cb-btn icon="pin" label="固定"></cb-btn></cb-group>
            <cb-group on><cb-btn icon="solo" label="エディターをソロ"></cb-btn></cb-group>
            <cb-group on><cb-btn icon="dot" label="エディター内録音"></cb-btn></cb-group>
            <cb-group><cb-btn icon="feedback" label="入力"></cb-btn></cb-group>
            <cb-group class="push"><cb-btn icon="home2" label="表示"></cb-btn><cb-btn dark arrow icon="down" label="表示メニュー"></cb-btn></cb-group>
            <cb-group><cb-btn on icon="autoscroll" label="自動スクロール"></cb-btn><cb-btn dark arrow icon="down" label="自動スクロール設定"></cb-btn></cb-group>
            <cb-group on><cb-btn icon="acoustic" label="試聴"></cb-btn></cb-group>
            <cb-group>
                <cb-btn on icon="select" label="選択"></cb-btn>
                ${['range', 'pencil', 'eraser', 'knife', 'scissors', 'glue', 'mute', 'zoom', 'line']
                    .map(t => `<cb-btn icon="${t}" label="${t}"></cb-btn>`).join('')}
            </cb-group>
            <cb-group><cb-btn icon="part" label="パート境界"></cb-btn></cb-group>
            <cb-group><cb-btn icon="loop" label="ループ"></cb-btn></cb-group>
            <cb-dots></cb-dots>
            <cb-group field class="vel"><cb-icon name="noteIn"></cb-icon><input value="100" size="3" aria-label="ベロシティー"><cb-icon name="spin"></cb-icon><cb-btn arrow icon="down" label="ベロシティーメニュー"></cb-btn></cb-group>
            <cb-group field><cb-icon class="link" name="link"></cb-icon><cb-select class="length" value="グリッドにリンク" label="長さ"></cb-select></cb-group>
            <cb-dots></cb-dots>
            <cb-group>${['up1', 'down1', 'up2', 'down2'].map(t => `<cb-btn icon="${t}" label="${t}"></cb-btn>`).join('')}</cb-group>
            <cb-group field><cb-btn on icon="snap" label="スナップ"></cb-btn><cb-select class="snap" value="グリッド" label="スナップタイプ"></cb-select><cb-btn icon="nudge" label="ナッジ"></cb-btn></cb-group>
            <cb-group><cb-btn><b>Q</b></cb-btn><cb-select class="quant" value="1/32" label="クオンタイズ"></cb-select><cb-btn narrow icon="iq" label="反復クオンタイズ"></cb-btn><cb-btn><b class="e">e</b></cb-btn></cb-group>
            <cb-group field><cb-btn narrow icon="ell" label="長さクオンタイズ"></cb-btn><cb-select class="preset" value="クオンタイズ." label="長さクオンタイズの値"></cb-select></cb-group>
            <cb-group field><cb-btn on icon="magnet" label="ステップ"></cb-btn><cb-btn icon="stack" label="レイヤー"></cb-btn><cb-btn arrow icon="down" label="レイヤーメニュー"></cb-btn></cb-group>
            <cb-group field class="push more">ラ</cb-group>
            <cb-group><cb-btn icon="open" label="別ウィンドウで開く"></cb-btn><cb-btn dark class="setup" icon="setup" label="設定"></cb-btn></cb-group>
        `;
    }
}
customElements.define('cb-editor-tools', CbEditorTools);

class CbKeyEditor extends CbElement {
    get styles() {
        return `
            :host { display: flex; flex-direction: column; border: 2px solid var(--line); border-radius: 8px 8px 8px 0; padding: 7px; background: var(--panel); min-height: 0; }
            ${TIMELINE_CSS}
            .info { height: 40px; margin-top: 7px; flex: none; background: #18191a; text-align: center; line-height: 42px; font-size: 10px; }
            .grid { flex: 1; display: grid; grid-template: 25px minmax(0, 1fr) 3px 90px 3px 69px 12px / 70px minmax(0, 1fr) 12px; min-height: 0; }
            .grid > * { min-width: 0; min-height: 0; overflow: hidden; }
            .ruler { background: #1b1c20; }
            .ruler svg .tag { fill: #b9bbbd; font-size: 9px; font-weight: 400; }
            .area { background: linear-gradient(90deg, transparent 587px, #323335 587px); }
            .split { grid-column: 2 / 4; background: linear-gradient(#6c6e70, #6c6e70) center / 100% 2px no-repeat; display: flex; align-items: center; gap: 2px; padding-left: 741px; }
            .split i { width: 4px; height: 2px; background: #fff; outline: 1px solid #222; }
            .lab { width: 69px; height: 31px; border: 1px solid #55585a; padding: 1px 3px; font-size: 9px; line-height: 13px; font-weight: 600; grid-row: span 2; }
            .add { display: flex; width: 69px; background: #3c3f42; --icon: 10px; }
            .add cb-btn { flex: 1; }
            .side { display: flex; flex-direction: column; gap: 3px; --icon: 9px; }
            .box { display: grid; place-items: center; background: #3c3f42; border-radius: 2px; width: 12px; height: 22px; flex: none; --icon: 9px; }
            .side cb-slider { flex: 1; min-height: 0; }
            .off { background: #34373a; margin: 2px 0; }
            .bottom { grid-column: 2 / 4; display: flex; gap: 3px; padding-right: 13px; }
            .bottom cb-scroll { flex: 1; --from: 15px; }
            .bottom cb-slider { width: 84px; }
        `;
    }

    get markup() {
        const zoom = { origin: 0, bar: 195.667, bars: 8 };
        const lines = gridRects({ ...zoom, bars: 3, split: 4, colors: ['#6a6c6e', '#505355', '#33373a'] })
            + gridRects({ ...zoom, origin: 587, bars: 5, split: 1, colors: ['#7a7b7c', '#565759'] });
        const head = '<rect x="177" width="1" height="100%" fill="#fff"/>';
        const black = [5, 40, 59, 80].map(y => `<rect y="${y}" width="38" height="11" fill="#16181a"/>`).join('');
        const seams = [9, 46, 65, 84].map(y => `<rect x="38" y="${y}" width="29" height="1" fill="#222"/>`).join('');
        const rows = [5, 40, 59, 80].map(y => `<rect y="${y}" width="587" height="11" fill="#212528"/>`).join('');
        const dots = '<i></i><i></i><i></i><i></i>';
        return `
            <cb-editor-tools></cb-editor-tools>
            <div class="info">選択オブジェクトなし</div>
            <div class="grid">
                <div class="ruler"></div>
                <div class="ruler"><svg>${rulerMarks({ ...zoom, skip: [1, 4] })}
                    <path fill="#fff" d="M0 0h9L0 10z"/>
                    <path fill="#25282b" stroke="#55585a" d="M.5 26V9.500h44V26M543.500 26V9.500h43V26"/>
                    <text class="tag" x="6" y="21">テューバ</text><text class="tag" x="549" y="21">テューバ</text>${head}</svg></div>
                <div><div class="box"><cb-icon name="down"></cb-icon></div></div>

                <div><svg><rect width="67" height="100%" fill="#b1b3b5"/>${seams}<rect y="27" width="67" height="1" fill="#222"/>${black}
                    <text x="45" y="25" style="fill:#25292c;font-weight:400">C2</text></svg></div>
                <div class="area"><svg>${rows}${lines}<rect y="28" width="100%" height="1" fill="#5a5c5e"/>
                    <rect x="1" y="39" width="49" height="11" fill="#111"/><rect x="1" y="40" width="48" height="9" fill="#c03c52"/>
                    <text x="4" y="48" style="font-size:9px">A#1</text>${head}</svg></div>
                <div class="side">
                    <div class="box"><cb-icon name="chevU"></cb-icon><cb-icon name="chevD"></cb-icon></div>
                    <cb-slider vertical value="50" label="縦ズーム"></cb-slider>
                </div>

                <div class="lab">ベロシティー</div><div class="split">${dots}</div>
                <div class="area"><svg>${lines}<rect x="1" y="20" width="5" height="69" fill="#111"/><rect x="1" y="21" width="4" height="68" fill="#c03c52"/>${head}</svg></div><div class="off"></div>
                <div class="lab">Brightness<br>CC 74</div><div class="split">${dots}</div>
                <div class="area"><svg>${lines}${head}</svg></div><div class="off"></div>

                <div class="add"><cb-btn icon="plus" label="レーンを追加"></cb-btn><cb-btn icon="down" label="レーン設定"></cb-btn></div>
                <div class="bottom"><cb-scroll></cb-scroll><cb-slider value="50" label="横ズーム"></cb-slider></div>
            </div>
        `;
    }
}
customElements.define('cb-key-editor', CbKeyEditor);

class CbLowerTabs extends CbElement {
    get styles() {
        return `
            :host { display: flex; align-items: flex-start; height: 22px; margin-top: -2px; padding-left: 4px; z-index: 1; font-weight: 600; color: #d6d8d9; }
            button { cursor: pointer; font-size: 12px; line-height: 26px; height: 24px; white-space: nowrap; }
            .x { width: 10px; margin-right: 26px; padding-top: 8px; --icon: 11px; }
            .tab { display: flex; align-items: center; justify-content: space-between; width: 106px; height: 22px; margin: 0 19px 0 18px; padding: 2px 6px 0 20px; background: var(--panel); border: 2px solid var(--line); border-top: 0; border-radius: 0 0 4px 4px; color: #fff; font-size: 10px; --icon: 11px; }
            .more { display: flex; gap: 36px; }
            .more button:nth-child(-n+2) { font-size: 10px; }
        `;
    }

    get markup() {
        return `
            <button class="x" aria-label="閉じる"><cb-icon name="close"></cb-icon></button>
            <button>MixConsole</button>
            <button class="tab">エディター<cb-icon name="down"></cb-icon></button>
            <div class="more"><button>サンプラーコントロール</button><button>コードパッド</button><button>MIDI Remote</button></div>
        `;
    }
}
customElements.define('cb-lower-tabs', CbLowerTabs);

/* ---------- MEDIA RACK ---------- */
const TILES = {
    keys: '<path d="M13 14h9v23h4v19H13zM32.500 14h7v23h3v19h-13V37h3zM48 14h9v42H45V37h3z"/>',
    fx: '<text x="35" y="50" text-anchor="middle" font-family="Open Sans" font-size="40" font-weight="700">FX</text>',
    loop: '<path d="M18.700 14H38v7H27z"/><path fill="none" stroke="currentColor" stroke-width="7" d="M37 17.500A17.500 17.500 0 1 1 19.700 36"/><path d="M11.700 36l8-10 7.600 10.500z"/>',
    preset: '<path d="M10 28.500L17.700 15h15l7.600 13.500L32.700 42h-15zM36.700 44.300L42 34h12.700L60 44.300 54.700 55H42z"/>',
    user: '<path d="M12 28.700L20 14h15.300L43 28.700 35.300 43H20z"/><path stroke="#a6a8aa" stroke-width="2.500" d="M30 55c0-10 4-13 12.500-13S55 45 55 55c-4 3-21 3-25 0z"/><circle cx="42.300" cy="33.700" r="8.500" stroke="#a6a8aa" stroke-width="2.500"/>',
    browse: '<rect x="9" y="21" width="52" height="20" rx="2"/><circle cx="46.300" cy="30.700" r="2.500" fill="#a6a8aa"/><circle cx="54.300" cy="30.700" r="2.500" fill="#a6a8aa"/><circle cx="27.700" cy="41.700" r="12" fill="#a6a8aa"/><circle cx="27.700" cy="41.700" r="7.500" fill="none" stroke="currentColor" stroke-width="4"/><path stroke="currentColor" stroke-width="4.500" d="M33 47l9 8"/>',
    star: '<path d="M35 12l6 16.500h17.500L44.500 39l5 17.500L35 46.500l-14.500 10 5-17.500-14-10.500H29z"/>'
};

class CbTile extends CbElement {
    get styles() {
        return `
            :host { display: block; width: 108px; height: 124px; font-size: 11px; }
            button { display: flex; flex-direction: column; align-items: center; gap: 12px; width: 100%; white-space: nowrap; cursor: pointer; color: #dfe1e2; }
            svg { width: 70px; height: 70px; border-radius: 3px; background: #a6a8aa; color: #25292c; fill: #25292c; }
        `;
    }

    get markup() {
        return `<button><svg viewBox="0 0 70 70">${TILES[this.attr('icon')]}</svg><slot></slot></button>`;
    }
}
customElements.define('cb-tile', CbTile);

class CbMedia extends CbElement {
    get styles() {
        return `
            :host { display: flex; flex-direction: column; }
            nav { display: flex; height: 25px; margin-bottom: -2px; z-index: 1; font-weight: 600; font-size: 11px; color: #fff; }
            nav button { width: 70px; line-height: 20px; padding-bottom: 3px; }
            nav button + button { width: 81px; background: var(--panel); border: 2px solid var(--line); border-bottom: 0; border-radius: 4px 4px 0 0; }
            .panel { flex: 1; border: 2px solid var(--line); border-radius: 8px; background: var(--panel); padding: 6px 7px; }
            .search { display: flex; gap: 4px; height: 19px; }
            label { flex: 1; display: flex; align-items: center; gap: 4px; padding: 0 3px; background: var(--field); border: 1px solid #5a5c5e; border-radius: 3px; --icon: 13px; }
            input { flex: 1; font-size: 11px; font-style: italic; outline: 0; }
            input::placeholder { color: #8c8e90; }
            .search cb-group { height: 19px; }
            .nav { display: flex; align-items: center; gap: 3px; height: 32px; margin-bottom: 37px; padding-top: 2px; border-bottom: 1px solid #6a6c6e; --icon: 15px; }
            .nav button { width: 20px; height: 20px; display: grid; place-items: center; color: #e2e4e5; }
            .nav button:first-child { color: #616365; }
            .tiles { display: grid; grid-template-columns: 108px 108px; margin: 0 -6px 0 -4px; }
        `;
    }

    get markup() {
        return `
            <nav><button>VSTi</button><button>メディア</button></nav>
            <div class="panel">
                <div class="search">
                    <label><cb-icon name="search"></cb-icon><input type="search" placeholder="検索" aria-label="検索"></label>
                    <cb-group><cb-btn icon="list" label="リスト"></cb-btn></cb-group>
                </div>
                <div class="nav"><button aria-label="戻る"><cb-icon name="back"></cb-icon></button><button aria-label="ホーム"><cb-icon name="home"></cb-icon></button></div>
                <div class="tiles">
                    <cb-tile icon="keys">VST インスト...ント</cb-tile>
                    <cb-tile icon="fx">VST エフェクト</cb-tile>
                    <cb-tile icon="loop">ループ &amp; サンプル</cb-tile>
                    <cb-tile icon="preset">プリセット</cb-tile>
                    <cb-tile icon="user">ユーザープリセット</cb-tile>
                    <cb-tile icon="browse">ファイルブラウザー</cb-tile>
                    <cb-tile icon="star">お気に入り</cb-tile>
                </div>
            </div>
        `;
    }
}
customElements.define('cb-media', CbMedia);

/* ---------- TRANSPORT ---------- */
class CbTransport extends CbElement {
    get styles() {
        return `
            :host { display: flex; align-items: center; gap: 5px; height: 40px; padding: 0 5px 1px 4px; }
            .l { flex: 139; }
            .r { flex: 125; }
            cb-dots { margin: 0 2px 0 -2px; }
            .part { width: 86px; --pad: 2px; }
            .mix { width: 100px; border-left: 1px solid #4c4f52; }
            .midi { margin-left: 5px; --icon: 18px; }
            .aq { width: 38px; font-size: 14px; color: #c9cbcd; }
            .time { width: 125px; padding-right: 6px; line-height: 25px; background: var(--field); text-align: right; font-size: 15px; white-space: pre; }
            .keys { display: flex; height: 32px; border: 2px solid #b9bbbd; border-radius: 3px; background: #6b6d70; --icon: 16px; color: #e6e8e9; }
            .keys cb-btn { width: 41px; }
            .keys .wide { width: 49px; }
            .keys .stop { width: 50px; background: #a9acae; color: #25292c; }
            .tempo { display: flex; align-items: center; }
            .tempo input { width: 62px; text-align: center; }
            .tempo cb-icon { --icon: 15px; }
            .sig { width: 51px; margin-left: 4px; text-align: center; border-left: 1px solid #34373a; line-height: 23px; }
            .tap { width: 49px; background: #3a3d40; }
            .meter { display: flex; align-items: flex-end; width: 89px; height: 25px; gap: 1px; padding: 1px 3px 1px 32px; background: var(--field); box-shadow: inset 0 0 0 1px #4c4f52; border-radius: 3px; }
            .meter i { width: 8px; height: 6px; background: var(--cyan); }
            .meter .red { width: 3px; height: 23px; background: #e80f0f; }
            .meter .red:first-child { margin-right: 25px; }
            .meter .red:last-child { margin-left: 6px; }
            .dim { color: #6b6d70; }
        `;
    }

    get markup() {
        return `
            <cb-group><cb-btn icon="clock" label="遅延補正"></cb-btn></cb-group>
            <cb-group field><cb-btn icon="dot" label="録音モード"></cb-btn><cb-btn narrow arrow icon="down" label="録音モードメニュー"></cb-btn></cb-group>
            <cb-dots></cb-dots>
            <cb-group field><cb-btn icon="wave" label="オーディオ録音モード"></cb-btn><cb-btn narrow arrow icon="down" label="オーディオ録音メニュー"></cb-btn></cb-group>
            <cb-dots></cb-dots>
            <cb-group field><cb-icon class="midi" name="midi"></cb-icon><cb-select class="part" value="新規パート" label="MIDI 録音モード"></cb-select><cb-select class="mix" value="ミックス" label="サイクル録音モード"></cb-select></cb-group>
            <cb-dots></cb-dots>
            <cb-group><cb-btn class="aq">AQ</cb-btn></cb-group>
            <span class="l"></span>
            <cb-group><cb-btn icon="locL" label="左ロケーター"></cb-btn><div class="time">1.  1.  1.    0</div></cb-group>
            <span></span>
            <cb-group><cb-btn icon="locR" label="右ロケーター"></cb-btn><div class="time">1.  1.  1.    0</div></cb-group>
            <cb-group><cb-btn icon="inP" label="パンチイン"></cb-btn><cb-btn icon="outP" label="パンチアウト"></cb-btn></cb-group>
            <div class="keys">
                <cb-btn icon="toStart" label="先頭へ"></cb-btn><cb-btn icon="toEnd" label="末尾へ"></cb-btn><cb-btn icon="cycle" label="サイクル"></cb-btn>
                <cb-btn class="stop" icon="stop" label="停止"></cb-btn><cb-btn class="wide" icon="play" label="再生"></cb-btn><cb-btn class="wide" icon="rec" label="録音"></cb-btn>
            </div>
            <cb-dots></cb-dots>
            <cb-group class="dim"><cb-btn icon="feedback" label="プリカウント" style="width:38px"></cb-btn></cb-group>
            <cb-group field><cb-btn icon="note" label="時間表示形式"></cb-btn><div class="time">1.  4.  3.  56</div></cb-group>
            <cb-dots></cb-dots>
            <cb-group field class="tempo"><cb-btn on icon="tempo" label="テンポトラック"></cb-btn><input value="147.000" size="7" aria-label="テンポ"><cb-icon name="spin"></cb-icon><div class="sig">4/4</div><cb-btn class="tap">Tap</cb-btn><cb-btn arrow icon="down" label="テンポメニュー"></cb-btn></cb-group>
            <cb-dots></cb-dots>
            <span class="r"></span>
            <cb-group><cb-btn icon="click" label="メトロノーム"></cb-btn><cb-btn narrow icon="gear" label="メトロノーム設定"></cb-btn></cb-group>
            <cb-dots></cb-dots>
            <div class="meter"><i class="red"></i><i></i><i style="height:5px"></i><i class="red"></i></div>
            <cb-dots style="margin-right:0"></cb-dots>
        `;
    }
}
customElements.define('cb-transport', CbTransport);

class CbApp extends CbElement {
    get styles() {
        return `
            :host { display: flex; flex-direction: column; height: 100vh; }
            :host > :not(main) { flex: none; }
            main { flex: 1; min-height: 0; display: grid; grid-template: minmax(0, 1fr) / 80px minmax(0, 1fr) 230px; gap: 4px; padding: 5px 4px 4px; background: #0a0a0b; }
            .center { display: grid; grid-template: minmax(0, 431fr) 5px minmax(0, 393fr) 20px / minmax(0, 1fr); }
            .center cb-key-editor { grid-row: 3; }
            .center cb-lower-tabs { grid-row: 4; }
        `;
    }

    get markup() {
        return `
            <cb-title-bar></cb-title-bar>
            <cb-menu-bar></cb-menu-bar>
            <cb-toolbar></cb-toolbar>
            <cb-status-line></cb-status-line>
            <cb-info-line></cb-info-line>
            <cb-overview></cb-overview>
            <main>
                <cb-channel></cb-channel>
                <div class="center"><cb-project></cb-project><cb-key-editor></cb-key-editor><cb-lower-tabs></cb-lower-tabs></div>
                <cb-media></cb-media>
            </main>
            <cb-transport></cb-transport>
        `;
    }
}
customElements.define('cb-app', CbApp);
</script>
</body>
</html>
